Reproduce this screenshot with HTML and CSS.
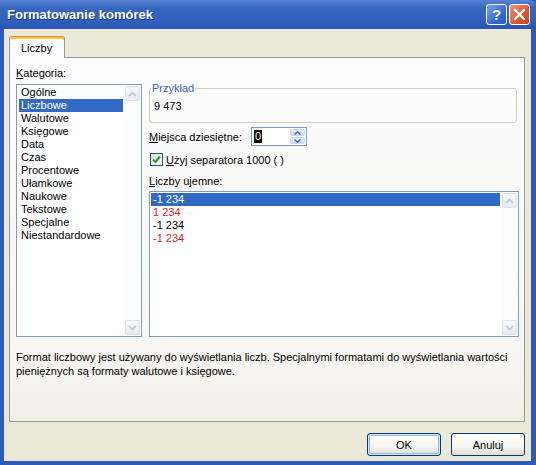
FILE: index.html
```html
<!DOCTYPE html>
<html lang="pl">
<head>
    <meta charset="UTF-8">
    <title>Formatowanie komórek</title>
    <link rel="stylesheet" href="styles.css">
</head>
<body>
    <div class="window">
        <div class="titlebar">
            <span class="title">Formatowanie komórek</span>
            <div class="caption-buttons">
                <span class="cap-btn help">?</span>
                <span class="cap-btn close">
                    <svg width="13" height="13" viewBox="0 0 13 13"><path d="M2 2 L11 11 M11 2 L2 11" stroke="#fff" stroke-width="2.4" stroke-linecap="round"/></svg>
                </span>
            </div>
        </div>

        <div class="client">
            <div class="tabs">
                <div class="tab active">Liczby</div>
            </div>

            <div class="panel">
                <div class="columns">
                    <div class="left-col">
                        <div class="label"><u>K</u>ategoria:</div>
                        <div class="listbox cat-list">
                            <ul class="items">
                                <li>Ogólne</li>
                                <li class="selected">Liczbowe</li>
                                <li>Walutowe</li>
                                <li>Księgowe</li>
                                <li>Data</li>
                                <li>Czas</li>
                                <li>Procentowe</li>
                                <li>Ułamkowe</li>
                                <li>Naukowe</li>
                                <li>Tekstowe</li>
                                <li>Specjalne</li>
                                <li>Niestandardowe</li>
                            </ul>
                            <div class="scrollbar">
                                <span class="sb-btn"><svg width="9" height="6" viewBox="0 0 9 6"><path d="M1 5 L4.5 1.5 L8 5" fill="none" stroke="#bcc4d2" stroke-width="1.6"/></svg></span>
                                <span class="sb-btn"><svg width="9" height="6" viewBox="0 0 9 6"><path d="M1 1 L4.5 4.5 L8 1" fill="none" stroke="#bcc4d2" stroke-width="1.6"/></svg></span>
                            </div>
                        </div>
                    </div>

                    <div class="right-col">
                        <fieldset class="sample">
                            <legend>Przykład</legend>
                            <div class="sample-value">9 473</div>
                        </fieldset>

                        <div class="row decimals">
                            <span class="row-label"><u>M</u>iejsca dziesiętne:</span>
                            <div class="spinner">
                                <span class="spin-value"><span class="sel">0</span></span>
                                <div class="spin-btns">
                                    <span class="spin-btn"><svg width="7" height="4" viewBox="0 0 7 4"><path d="M0.5 3.5 L3.5 0.8 L6.5 3.5" fill="none" stroke="#4d6185" stroke-width="1.3"/></svg></span>
                                    <span class="spin-btn"><svg width="7" height="4" viewBox="0 0 7 4"><path d="M0.5 0.5 L3.5 3.2 L6.5 0.5" fill="none" stroke="#4d6185" stroke-width="1.3"/></svg></span>
                                </div>
                            </div>
                        </div>

                        <div class="row checkrow">
                            <span class="checkbox">
                                <svg width="11" height="11" viewBox="0 0 11 11"><path d="M2 5.5 L4.5 8 L9 2.5" fill="none" stroke="#21a121" stroke-width="2"/></svg>
                            </span>
                            <span><u>U</u>żyj separatora 1000 ( )</span>
                        </div>

                        <div class="label neg-label"><u>L</u>iczby ujemne:</div>
                        <div class="listbox neg-list">
                            <ul class="items">
                                <li class="selected">-1 234</li>
                                <li class="red">1 234</li>
                                <li>-1 234</li>
                                <li class="red">-1 234</li>
                            </ul>
                            <div class="scrollbar">
                                <span class="sb-btn"><svg width="9" height="6" viewBox="0 0 9 6"><path d="M1 5 L4.5 1.5 L8 5" fill="none" stroke="#bcc4d2" stroke-width="1.6"/></svg></span>
                                <span class="sb-btn"><svg width="9" height="6" viewBox="0 0 9 6"><path d="M1 1 L4.5 4.5 L8 1" fill="none" stroke="#bcc4d2" stroke-width="1.6"/></svg></span>
                            </div>
                        </div>
                    </div>
                </div>

                <p class="description">Format liczbowy jest używany do wyświetlania liczb. Specjalnymi formatami do wyświetlania wartości<br>pieniężnych są formaty walutowe i księgowe.</p>
            </div>

            <div class="actions">
                <button class="btn default">OK</button>
                <button class="btn">Anuluj</button>
            </div>
        </div>
    </div>
</body>
</html>
```

FILE: styles.css
```css
* {
    margin: 0;
    padding: 0;
    box-sizing: border-box;
}

body {
    font-family: "Liberation Sans", Arial, sans-serif;
    font-size: 11px;
    color: #000;
    background-color: #ece9d8;
}

ul {
    list-style: none;
}

.window {
    width: 536px;
    height: 465px;
    display: flex;
    flex-direction: column;
    background-color: #2d5cb8;
}

/* title bar */
.titlebar {
    flex: none;
    height: 29px;
    display: flex;
    align-items: center;
    padding: 0 6px 0 7px;
    color: #fff;
    background: linear-gradient(#5884d4, #3968c2 25%, #2f5fbb 75%, #2755b0);
    border-top-right-radius: 6px;
}

.title {
    flex: 1;
    font-size: 13px;
    font-weight: bold;
    text-shadow: 1px 1px 0 #1b3a8c;
}

.caption-buttons {
    display: flex;
    gap: 2px;
}

.cap-btn {
    width: 21px;
    height: 21px;
    border: 1px solid #fff;
    border-radius: 3px;
    display: flex;
    align-items: center;
    justify-content: center;
}

.help {
    background: linear-gradient(135deg, #7aa5f2, #3567d6 60%, #2a5ccb);
    font-size: 15px;
    font-weight: bold;
    color: #fff;
}

.close {
    background: linear-gradient(135deg, #f09878, #dc5630 60%, #c9401e);
}

/* dialog body */
.client {
    flex: 1;
    margin: 0 5px 4px 4px;
    padding: 7px 6px 0 5px;
    background-color: #ece9d8;
    display: flex;
    flex-direction: column;
}

.tabs {
    display: flex;
}

.tab {
    position: relative;
    z-index: 1;
    width: 56px;
    height: 22px;
    margin-bottom: -1px;
    padding: 5px 0 0 11px;
    line-height: 13px;
    border: 1px solid #919b9c;
    border-top: 1px solid #e68b2c;
    border-bottom: none;
    border-radius: 3px 3px 0 0;
    background-color: #fcfcfe;
    box-shadow: inset 0 2px 0 #ffc83c;
}

.panel {
    height: 365px;
    padding: 9px 0 0 6px;
    border: 1px solid #919b9c;
    background: linear-gradient(#fcfcfe, #f7f6f1 80%, #f1efe6);
}

.columns {
    display: flex;
    gap: 7px;
}

.label {
    line-height: 13px;
}

.left-col {
    width: 126px;
}

.listbox {
    display: flex;
    border: 1px solid #7f9db9;
    background-color: #fff;
}

.cat-list {
    margin-top: 4px;
    height: 253px;
}

.items {
    flex: 1;
    padding: 1px 1px 0 2px;
}

.items li {
    height: 13px;
    line-height: 13px;
    padding-left: 2px;
    white-space: nowrap;
}

.items li.selected {
    background-color: #316ac5;
    color: #fff;
}

.items li.red {
    color: #dd1b24;
}

.scrollbar {
    width: 17px;
    padding: 1px;
    display: flex;
    flex-direction: column;
    justify-content: space-between;
    background-color: #fdfdfd;
}

.sb-btn {
    width: 15px;
    height: 15px;
    display: flex;
    align-items: center;
    justify-content: center;
    border: 1px solid #dde2ea;
    border-radius: 2px;
    background: linear-gradient(#f6f8fb, #e6eaf2);
}

/* right column */
.right-col {
    width: 370px;
}

.sample {
    width: 368px;
    margin-top: 15px;
    padding: 0 4px 9px 4px;
    border: 1px solid #d0d0bf;
    border-radius: 3px;
}

.sample legend {
    margin-left: -3px;
    padding: 0 1px;
    line-height: 13px;
    color: #3d64b4;
}

.sample-value {
    margin-top: 5px;
    line-height: 13px;
}

.row {
    display: flex;
    align-items: center;
}

.decimals {
    margin-top: 4px;
    height: 19px;
}

.row-label {
    width: 102px;
}

.spinner {
    width: 56px;
    height: 19px;
    display: flex;
    border: 1px solid #7f9db9;
    background-color: #fff;
}

.spin-value {
    flex: 1;
    padding: 2px 0 0 2px;
}

.spin-value .sel {
    display: inline-block;
    line-height: 13px;
    padding: 0 1px;
    background-color: #000;
    color: #fff;
}

.spin-btns {
    width: 16px;
    padding: 1px 1px 1px 0;
    display: flex;
    flex-direction: column;
    gap: 1px;
}

.spin-btn {
    flex: 1;
    display: flex;
    align-items: center;
    justify-content: center;
    border: 1px solid #c9d6f2;
    border-radius: 2px;
    background: linear-gradient(#e6edfc, #c9d8f6);
}

.checkrow {
    margin-top: 7px;
    padding-left: 1px;
    height: 13px;
    gap: 3px;
}

.checkbox {
    width: 13px;
    height: 13px;
    display: flex;
    align-items: center;
    justify-content: center;
    border: 1px solid #1c5180;
    background: linear-gradient(135deg, #dcdcd7, #fff);
}

.neg-label {
    margin-top: 9px;
}

.neg-list {
    margin-top: 3px;
    height: 146px;
}

.neg-list .items {
    padding-left: 1px;
}

.description {
    margin-top: 13px;
    line-height: 14px;
}

/* buttons */
.actions {
    margin-top: 11px;
    display: flex;
    justify-content: flex-end;
    gap: 10px;
}

.btn {
    width: 74px;
    height: 23px;
    font-family: "Liberation Sans", Arial, sans-serif;
    font-size: 11px;
    color: #000;
    border: 1px solid #003c74;
    border-radius: 3px;
    background: linear-gradient(#fff, #f4f4f0 60%, #e2dfd4);
}

.btn.default {
    box-shadow: inset 0 0 0 1px #cee7ff, inset 0 0 0 2px #98b8ea;
}
```
